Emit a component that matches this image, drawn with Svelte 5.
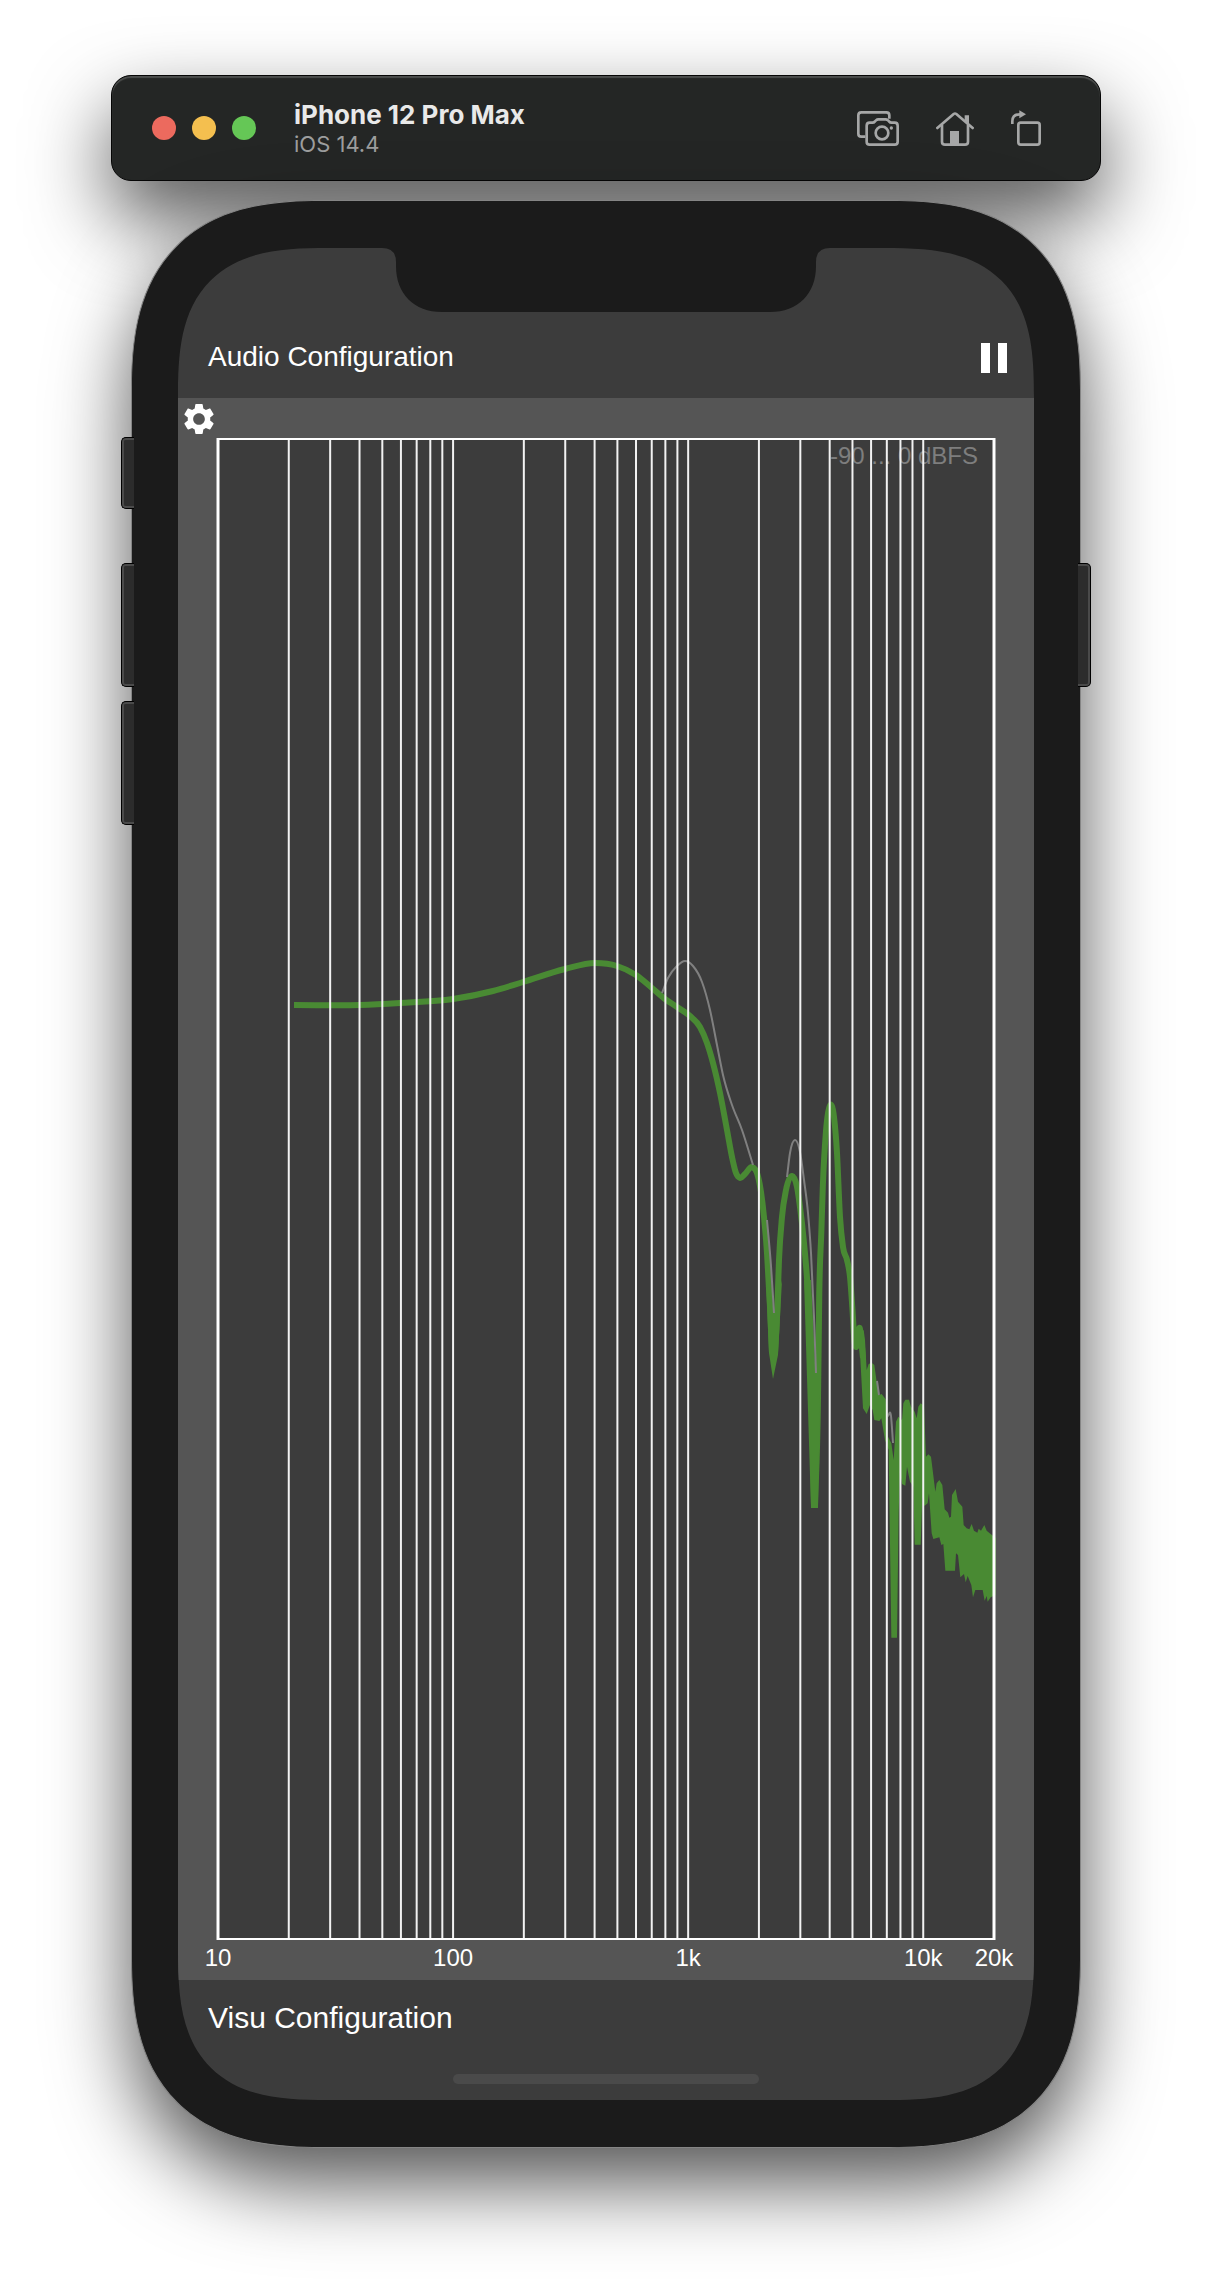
<script>
  const lights = [
    { name: 'Close', tone: 'red' },
    { name: 'Minimize', tone: 'amber' },
    { name: 'Zoom', tone: 'green' },
  ];

  // Plot frame, in the chart's own units
  const frame = { left: 40, right: 816, top: 41, bottom: 1541 };
  const decades = Math.log10(20000 / 10);
  const xOf = (hz) => frame.left + (Math.log10(hz / 10) / decades) * (frame.right - frame.left);

  const gridLines = [];
  for (let base = 10; base <= 10000; base *= 10) {
    for (let step = 1; step < 10; step++) {
      const hz = base * step;
      if (hz > 10 && hz < 20000) gridLines.push(xOf(hz));
    }
  }

  const ticks = [
    { hz: 10, label: '10' },
    { hz: 100, label: '100' },
    { hz: 1000, label: '1k' },
    { hz: 10000, label: '10k' },
    { hz: 20000, label: '20k' },
  ];

  // Hermite spline through samples sorted by x, with spacing-aware slopes
  function smooth(pts) {
    const last = pts.length - 1;
    const secant = (i) => (pts[i + 1][1] - pts[i][1]) / (pts[i + 1][0] - pts[i][0]);
    const slope = (i) => {
      if (i === 0) return secant(0);
      if (i === last) return secant(last - 1);
      const before = pts[i][0] - pts[i - 1][0];
      const after = pts[i + 1][0] - pts[i][0];
      return (secant(i - 1) * after + secant(i) * before) / (before + after);
    };
    let d = `M${pts[0][0]} ${pts[0][1]}`;
    for (let i = 0; i < last; i++) {
      const [x0, y0] = pts[i];
      const [x1, y1] = pts[i + 1];
      const third = (x1 - x0) / 3;
      d += `C${x0 + third} ${y0 + slope(i) * third} ${x1 - third} ${y1 - slope(i + 1) * third} ${x1} ${y1}`;
    }
    return d;
  }

  const lowBand = smooth([
    [116, 607], [182, 607], [222, 605], [275, 601], [315, 593], [345, 584], [387, 571],
    [417, 565], [439, 568], [458, 577], [474, 590], [487, 601], [499, 609], [512, 618],
    [522, 629], [529, 645], [535, 665], [542, 695], [549, 732], [554, 759], [558, 775],
    [562, 780], [567, 776], [574, 769], [579, 775], [583, 794], [586, 819], [589, 855],
    [592, 909], [594, 955],
  ]);
  const midBand = smooth([
    [597, 955], [599, 919], [601, 862], [604, 819], [608, 792], [614, 778], [619, 789],
    [622, 809], [626, 845], [630, 895], [633, 959], [636, 1107],
  ]);
  const highBand = smooth([
    [637, 1107], [640, 1002], [641.3, 895], [643.3, 835], [644.8, 789], [648, 733],
    [652.3, 707], [656, 719], [659, 755], [662, 819], [665, 849],
    [669, 862], [672, 879], [674.5, 912], [676.5, 944], [678, 949], [681.7, 930], [685, 960],
  ]);

  // Narrow notches where both flanks of the trace merge
  const dips = [
    '588,882 591,955 595,981 600,957 604,882 596,915',
    '626,882 633,1110 640,1110 644,882 639,882 637,965 633,882',
  ];

  const noise = [
    [120, -20], [131, -30], [135, 0], [140, 90], [146, 72], [155, 68], [163, 75], [172, 140], [177, 165],
    [185, 162], [197, 178], [204, 290], [214, 310], [221, 360], [228, 245], [235, 230],
    [246, 240], [250, 190], [256, 179], [267, 179], [273, 200], [284, 215], [290, 235],
    [295, 200], [302, 190], [312, 197], [318, 350], [325, 343], [333, 350], [346, 455],
    [350, 430], [358, 420], [367, 435], [374, 508], [384, 518], [388, 533], [393, 530],
    [396, 465], [407, 447], [414, 485], [427, 500], [431, 555], [440, 565], [448, 568],
    [455, 552], [462, 572], [472, 578], [476, 566], [483, 572], [493, 555], [500, 572],
    [512, 582], [528, 595], [527, 765], [512, 772], [503, 785], [500, 768], [494, 782],
    [488, 750], [466, 750], [459, 772], [454, 735], [443, 708], [437, 727], [432, 702],
    [421, 712], [414, 645], [408, 640], [405, 692], [388, 692], [376, 692], [370, 612],
    [364, 615], [358, 592], [340, 597], [335, 580], [327, 460], [323, 490], [313, 498],
    [307, 470], [302, 614], [284, 614], [280, 440], [270, 425], [261, 380], [256, 437],
    [246, 432], [240, 395], [236, 520], [231, 893], [214, 893], [206, 330], [195, 300],
    [184, 235], [178, 243], [163, 240], [158, 210], [150, 195], [140, 222], [129, 205],
    [119, 20],
  ]
    .map(([x, y]) => `${642 + x / 3},${942 + y / 3}`)
    .join(' ');

  const peakHold = [
    [[484, 595], [490, 580], [499, 568], [507, 563], [515, 568], [524, 584], [532, 612], [539, 647], [545, 677], [554, 707], [564, 732], [575, 767]],
    [[589, 822], [593, 868], [596, 915]],
    [[609, 779], [612, 755], [617, 742], [622, 754], [626, 782], [630, 815], [633, 855], [636, 919], [638, 975]],
    [[699, 983], [701, 997]],
    [[710, 1018], [713, 1018], [715, 1045]],
  ].map(smooth);
</script>

<main>
  <header class="toolbar">
    <div class="lights">
      {#each lights as light}
        <button class="light {light.tone}" aria-label={light.name}></button>
      {/each}
    </div>
    <div class="device">
      <h1>iPhone 12 Pro Max</h1>
      <p>iOS 14.4</p>
    </div>
    <div class="actions">
      <button aria-label="Screenshot">
        <svg width="42" height="36" viewBox="0 0 126 108" fill="none" stroke="currentColor" stroke-width="8">
          <path d="M25 80H13Q4 80 4 71V16Q4 7 13 7H88Q97 7 97 16V26" />
          <path d="M29 47Q29 38 38 38H46Q51 38 54 34L57 31Q60 28 64 28H86Q90 28 93 31L96 34Q99 38 104 38H113Q122 38 122 47V95Q122 104 113 104H38Q29 104 29 95Z" />
          <circle cx="75" cy="69" r="19" />
          <circle cx="103" cy="54" r="5" fill="currentColor" stroke="none" />
        </svg>
      </button>
      <button aria-label="Home">
        <svg width="38" height="36" viewBox="0 0 114 108" fill="none" stroke="currentColor" stroke-width="8">
          <path d="M4 54L53 12Q57 9 61 12L110 54" stroke-linecap="round" />
          <path d="M18 44V95Q18 104 27 104H87Q96 104 96 95V44" />
          <path d="M42 63H69V106H42ZM86 16H99V44L86 33Z" fill="currentColor" stroke="none" />
        </svg>
      </button>
      <button aria-label="Rotate">
        <svg width="30" height="36" viewBox="0 0 90 108" fill="none" stroke="currentColor" stroke-width="8">
          <rect x="22" y="38" width="64" height="66" rx="7" />
          <path d="M4 42V34Q4 13 27 13" />
          <path d="M25 1L45 13L25 25Z" fill="currentColor" stroke="none" />
        </svg>
      </button>
    </div>
  </header>

  <div class="phone">
    <span class="key mute"></span>
    <span class="key up"></span>
    <span class="key down"></span>
    <span class="key power"></span>

    <div class="screen">
      <svg class="notch" width="448" height="64" viewBox="0 0 448 64" aria-hidden="true">
        <path d="M0 0Q14 0 14 14V18C14 46 32 64 60 64H388C416 64 434 46 434 18V14Q434 0 448 0Z" />
      </svg>

      <div class="bar top">
        <button class="section audio">Audio Configuration</button>
        <button class="pause" aria-label="Pause">
          <svg width="26" height="30" viewBox="0 0 26 30" fill="currentColor">
            <path d="M0 0H9V30H0ZM17 0H26V30H17Z" />
          </svg>
        </button>
      </div>

      <section class="chart">
        <button class="gear" aria-label="Settings">
          <svg width="36" height="36" viewBox="0 0 24 24" fill="currentColor">
            <path d="M19.43 12.98c.04-.32.07-.64.07-.98s-.03-.66-.07-.98l2.11-1.65c.19-.15.24-.42.12-.64l-2-3.46c-.12-.22-.39-.3-.61-.22l-2.49 1c-.52-.4-1.08-.73-1.69-.98l-.38-2.65C14.46 2.18 14.25 2 14 2h-4c-.25 0-.46.18-.49.42l-.38 2.65c-.61.25-1.17.59-1.69.98l-2.49-1c-.23-.09-.49 0-.61.22l-2 3.46c-.13.22-.07.49.12.64l2.11 1.65c-.04.32-.07.65-.07.98s.03.66.07.98l-2.11 1.65c-.19.15-.24.42-.12.64l2 3.46c.12.22.39.3.61.22l2.49-1c.52.4 1.08.73 1.69.98l.38 2.65c.03.24.24.42.49.42h4c.25 0 .46-.18.49-.42l.38-2.65c.61-.25 1.17-.59 1.69-.98l2.49 1c.23.09.49 0 .61-.22l2-3.46c.12-.22.07-.49-.12-.64l-2.11-1.65zM12 15.9c-2.15 0-3.9-1.75-3.9-3.9s1.75-3.9 3.9-3.9 3.9 1.75 3.9 3.9-1.75 3.9-3.9 3.9z" />
          </svg>
        </button>
        <svg class="plot" viewBox="0 0 856 1582" role="img" aria-label="Spectrum">
          <rect class="field" x={frame.left} y={frame.top} width={frame.right - frame.left} height={frame.bottom - frame.top} />
          <text class="range" x="800" y="66" text-anchor="end">-90 ... 0 dBFS</text>
          <path class="level" d={lowBand} />
          <path class="level" d={midBand} />
          <path class="level" d={highBand} />
          {#each dips as points}
            <polygon class="solid" {points} />
          {/each}
          <polygon class="solid" points={noise} />
          {#each peakHold as d}
            <path class="peak" {d} />
          {/each}
          {#each gridLines as x}
            <line class="grid" x1={x} x2={x} y1={frame.top} y2={frame.bottom} />
          {/each}
          <path class="edge" d="M39 {frame.top}H817M39 {frame.bottom}H817" />
          <path class="side" d="M{frame.left} 40V1542M{frame.right} 40V1542" />
          {#each ticks as tick}
            <text class="tick" x={xOf(tick.hz)} y="1568" text-anchor="middle">{tick.label}</text>
          {/each}
        </svg>
      </section>

      <div class="bar bottom">
        <button class="section visu">Visu Configuration</button>
        <span class="indicator"></span>
      </div>
    </div>
  </div>
</main>

<style>
  :global(body) {
    margin: 0;
    background: #fff;
  }

  main {
    box-sizing: border-box;
    max-width: 1212px;
    margin: 0 auto;
    padding: 75px 111px 148px;
    font-family: 'Liberation Sans', Arial, sans-serif;
  }

  button {
    margin: 0;
    padding: 0;
    border: 0;
    background: none;
    color: inherit;
    font: inherit;
    cursor: pointer;
  }

  svg {
    display: block;
  }

  .toolbar {
    display: flex;
    align-items: center;
    box-sizing: border-box;
    height: 106px;
    padding: 0 59px 0 40px;
    border: 1px solid #050505;
    border-radius: 20px;
    background: #242625;
    box-shadow:
      inset 0 2px 1px #4c4e4d,
      0 36px 80px rgba(0, 0, 0, 0.67);
    font-family: Inter, 'Liberation Sans', sans-serif;
  }

  .lights {
    display: flex;
    gap: 16px;
  }

  .light {
    width: 24px;
    height: 24px;
    border-radius: 50%;
  }

  .red { background: #ec6a5e; }
  .amber { background: #f4bf4f; }
  .green { background: #65c756; }

  .device {
    flex: 1;
    margin-left: 38px;
  }

  h1,
  p {
    margin: 0;
  }

  h1 {
    color: #e9e9e9;
    font-size: 26px;
    font-weight: 700;
    line-height: 32px;
  }

  p {
    color: #9d9e9e;
    font-size: 22px;
    line-height: 26px;
  }

  .actions {
    display: flex;
    gap: 37px;
    color: #a6a7a7;
  }

  .phone {
    position: relative;
    margin: 19px 20px 0;
    padding: 47px 46px;
    border: 1px solid #858585;
    border-radius: 155px;
    background: #1b1b1b;
    box-shadow: 0 36px 80px rgba(0, 0, 0, 0.67);
  }

  .screen {
    position: relative;
    overflow: hidden;
    border-radius: 108px;
    background: #3c3c3c;
    color: #fff;
  }

  @supports (corner-shape: superellipse(1.4)) {
    .phone {
      border-radius: 192px;
      corner-shape: superellipse(1.36);
    }

    .screen {
      border-radius: 150px;
      corner-shape: superellipse(1.5);
    }
  }

  .key {
    position: absolute;
    left: -11px;
    box-sizing: border-box;
    width: 13px;
    height: 124px;
    border: 1px solid #000;
    border-right: 0;
    border-radius: 5px 0 0 5px;
    background: #2c2c2c;
    box-shadow: inset 2px 0 #4a4a4a, inset 0 2px #4a4a4a, inset 0 -2px #4a4a4a;
  }

  .mute { top: 236px; height: 72px; }
  .up { top: 362px; }
  .down { top: 500px; }

  .power {
    top: 362px;
    right: -11px;
    left: auto;
    border: 1px solid #000;
    border-left: 0;
    border-radius: 0 5px 5px 0;
    box-shadow: inset -2px 0 #4a4a4a, inset 0 2px #4a4a4a, inset 0 -2px #4a4a4a;
  }

  .notch {
    position: absolute;
    top: 0;
    left: 50%;
    transform: translateX(-50%);
    fill: #1b1b1b;
  }

  .bar {
    display: flex;
    box-sizing: border-box;
  }

  .top {
    align-items: flex-end;
    justify-content: space-between;
    height: 150px;
    padding: 0 27px 25px 30px;
  }

  .section {
    line-height: 32px;
  }

  .audio {
    font-size: 28px;
  }

  .visu {
    font-size: 30px;
  }

  .chart {
    position: relative;
    background: #555;
  }

  .gear {
    position: absolute;
    top: 3px;
    left: 3px;
  }

  .plot {
    width: 100%;
    height: auto;
  }

  .field {
    fill: #3c3c3c;
  }

  .range,
  .tick {
    font-size: 24px;
  }

  .range {
    fill: #7e7e7e;
  }

  .tick {
    fill: #fff;
  }

  .peak {
    fill: none;
    stroke: #808080;
    stroke-width: 2;
  }

  .level {
    fill: none;
    stroke: #498a33;
    stroke-width: 6;
  }

  .solid {
    fill: #498a33;
  }

  .grid {
    stroke: #f2f2f2;
    stroke-width: 2;
  }

  .edge {
    stroke: #fff;
    stroke-width: 2;
  }

  .side {
    stroke: #fff;
    stroke-width: 3;
  }

  .bottom {
    flex-direction: column;
    align-items: flex-start;
    justify-content: space-between;
    height: 120px;
    padding: 22px 30px 16px;
  }

  .indicator {
    align-self: center;
    width: 306px;
    height: 10px;
    border-radius: 5px;
    background: #4a4a4a;
  }
</style>
